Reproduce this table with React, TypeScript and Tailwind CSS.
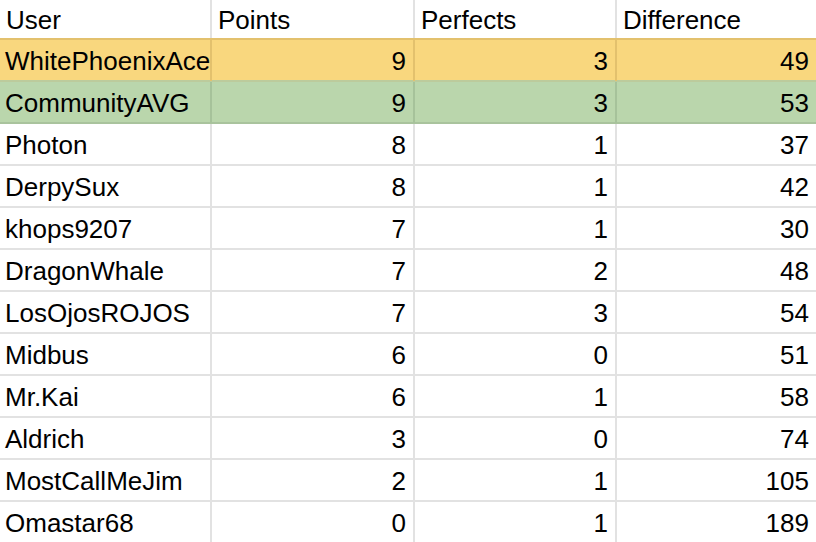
const rows = [
  { user: "WhitePhoenixAce", points: 9, perfects: 3, diff: 49, tone: "yellow" },
  { user: "CommunityAVG", points: 9, perfects: 3, diff: 53, tone: "green" },
  { user: "Photon", points: 8, perfects: 1, diff: 37 },
  { user: "DerpySux", points: 8, perfects: 1, diff: 42 },
  { user: "khops9207", points: 7, perfects: 1, diff: 30 },
  { user: "DragonWhale", points: 7, perfects: 2, diff: 48 },
  { user: "LosOjosROJOS", points: 7, perfects: 3, diff: 54 },
  { user: "Midbus", points: 6, perfects: 0, diff: 51 },
  { user: "Mr.Kai", points: 6, perfects: 1, diff: 58 },
  { user: "Aldrich", points: 3, perfects: 0, diff: 74 },
  { user: "MostCallMeJim", points: 2, perfects: 1, diff: 105 },
  { user: "Omastar68", points: 0, perfects: 1, diff: 189 },
]

const cols = "grid grid-cols-[212px_203px_202px_1fr]"

export default function App() {
  return (
    <div
      className="w-[816px] h-[542px] overflow-hidden bg-white text-[26px] text-black"
      style={{ fontFamily: '"Liberation Sans", Arial, sans-serif' }}
    >
      <div className={`${cols} h-[40px] border-b-2 border-[#e3c16d]`}>
        {["User", "Points", "Perfects", "Difference"].map((h, i) => (
          <div
            key={h}
            className={`flex items-center pt-[1px] pl-[6px] leading-none ${i < 3 ? "border-r-2 border-[#e2e2e2]" : ""}`}
          >
            {h}
          </div>
        ))}
      </div>
      {rows.map((r) => {
        const bg =
          r.tone === "yellow" ? "bg-[#f9d77e]" : r.tone === "green" ? "bg-[#bad6ac]" : "bg-white"
        const line =
          r.tone === "yellow" ? "border-[#bccb9c]" : r.tone === "green" ? "border-[#a9c39d]" : "border-[#e2e2e2]"
        const vline =
          r.tone === "yellow" ? "border-[#e3c16d]" : r.tone === "green" ? "border-[#a6c29a]" : "border-[#e2e2e2]"
        return (
          <div key={r.user} className={`${cols} h-[42px] border-b-2 ${line} ${bg}`}>
            <div className={`flex items-center pt-[2px] pl-[5px] border-r-2 ${vline} overflow-hidden whitespace-nowrap`}>
              {r.user}
            </div>
            <div className={`flex items-center justify-end pt-[2px] pr-[7px] border-r-2 ${vline}`}>{r.points}</div>
            <div className={`flex items-center justify-end pt-[2px] pr-[7px] border-r-2 ${vline}`}>{r.perfects}</div>
            <div className="flex items-center justify-end pt-[2px] pr-[7px]">{r.diff}</div>
          </div>
        )
      })}
    </div>
  )
}
